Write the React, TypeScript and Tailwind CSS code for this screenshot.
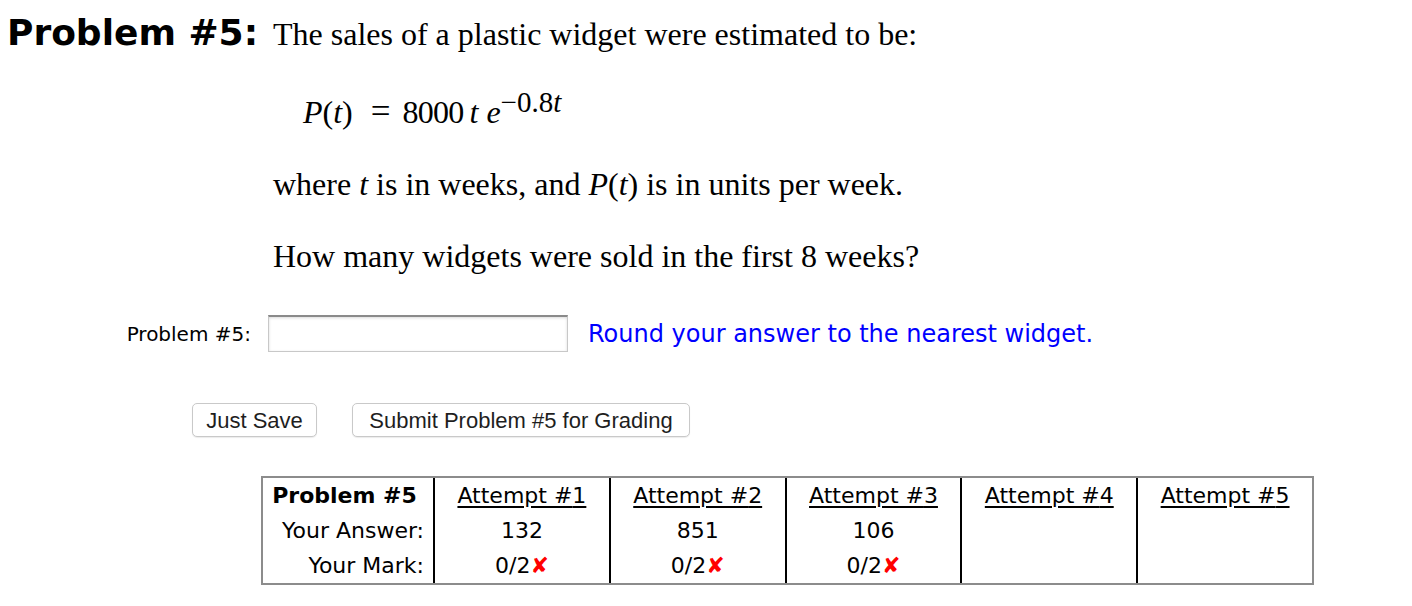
import React from "react";

const serif = { fontFamily: '"Liberation Serif", "Times New Roman", serif' };
const sans = { fontFamily: '"DejaVu Sans", Verdana, sans-serif' };
const ui = { fontFamily: '"Liberation Sans", Arial, sans-serif' };

function X() {
  return <span className="text-[#ff0000] font-bold">✘</span>;
}

export default function App() {
  const attempts = [
    { a: "132", m: true },
    { a: "851", m: true },
    { a: "106", m: true },
    { a: "", m: false },
    { a: "", m: false },
  ];
  return (
    <div className="w-[1412px] h-[606px] bg-white text-black overflow-hidden">
      <div className="flex items-baseline pt-[6px] h-[60px]">
        <div className="w-[273px] pl-[7px] shrink-0 font-bold text-[36px]" style={sans}>
          Problem #5:
        </div>
        <div className="text-[32px]" style={serif}>
          The sales of a plastic widget were estimated to be:
        </div>
      </div>

      <div className="pl-[303px] mt-[34px] text-[32px] leading-none h-[32px] flex items-baseline" style={serif}>
        <span>
          <i>P</i>(<i>t</i>)
        </span>
        <span className="ml-[18px] mr-[12px] text-[35px]">=</span>
        <span className="tracking-[-0.75px]">8000</span>
        <i className="ml-[6px]">t</i>
        <i className="ml-[8px]">e</i>
        <span className="relative -top-[11px] text-[29px]">
          −0.8<i>t</i>
        </span>
      </div>

      <div className="pl-[273px] mt-[42px] text-[32px] leading-none h-[32px]" style={serif}>
        where <i>t</i> is in weeks, and <i>P</i>(<i>t</i>) is in units per week.
      </div>

      <div className="pl-[273px] mt-[40px] text-[32px] leading-none h-[32px]" style={serif}>
        How many widgets were sold in the first 8 weeks?
      </div>

      <div className="flex items-center mt-[43px]">
        <div className="w-[268px] pr-[17px] text-right text-[20px] shrink-0" style={sans}>
          Problem #5:
        </div>
        <div className="w-[300px] h-[37px] border border-[#c8c8c8] border-t-[#8a8a8a] border-t-2 shadow-[inset_0_1px_3px_rgba(0,0,0,0.15)] bg-white shrink-0" />
        <div className="ml-[20px] text-[24px] text-[#0000ff]" style={sans}>
          Round your answer to the nearest widget.
        </div>
      </div>

      <div className="flex mt-[51px] pl-[192px] gap-[35px]" style={ui}>
        <button className="w-[125px] h-[34px] border border-[#c9c9c9] rounded-[5px] bg-white text-[22px] text-[#1e1e1e] shadow-[0_1px_1px_rgba(0,0,0,0.08)]">
          Just Save
        </button>
        <button className="w-[338px] h-[34px] border border-[#c9c9c9] rounded-[5px] bg-white text-[22px] text-[#1e1e1e] shadow-[0_1px_1px_rgba(0,0,0,0.08)]">
          Submit Problem #5 for Grading
        </button>
      </div>

      <div className="mt-[39px] ml-[261px] w-[1053px] border-2 border-[#8c8c8c] flex text-[22px]" style={sans}>
        <div className="w-[170px] shrink-0 flex flex-col items-end pr-[9px]">
          <div className="h-[35px] flex items-center font-bold w-full justify-center pl-[2px]">Problem #5</div>
          <div className="h-[35px] flex items-center">Your Answer:</div>
          <div className="h-[35px] flex items-center">Your Mark:</div>
        </div>
        {attempts.map((t, i) => (
          <div key={i} className="flex-1 border-l-2 border-black flex flex-col items-center">
            <div className="h-[35px] flex items-center underline underline-offset-[3px]">
              Attempt #{i + 1}
            </div>
            <div className="h-[35px] flex items-center">{t.a}</div>
            <div className="h-[35px] flex items-center">
              {t.m ? (
                <>
                  0/2
                  <X />
                </>
              ) : null}
            </div>
          </div>
        ))}
      </div>
    </div>
  );
}
